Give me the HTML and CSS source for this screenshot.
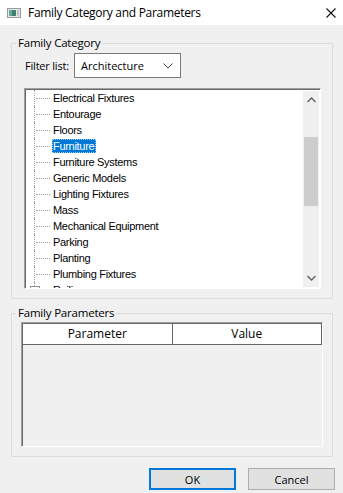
FILE: index.html
```html
<!DOCTYPE html>
<html lang="en">
<head>
    <meta charset="UTF-8">
    <meta name="viewport" content="width=device-width, initial-scale=1.0">
    <title>Family Category and Parameters</title>
    <link rel="stylesheet" href="styles.css">
</head>
<body>
    <div class="dialog">
        <div class="titlebar">
            <svg class="app-icon" width="14" height="10" viewBox="0 0 14 10">
                <rect x="0.5" y="0.5" width="13" height="9" fill="#e8e8e8" stroke="#9a9a9a"/>
                <rect x="2" y="2" width="7" height="6" fill="#3f7f74"/>
                <rect x="2" y="2" width="3" height="6" fill="#6aa79a"/>
                <rect x="10" y="2" width="2" height="6" fill="#b9c4c2"/>
            </svg>
            <span class="title">Family Category and Parameters</span>
            <svg class="close" width="10" height="10" viewBox="0 0 10 10">
                <path d="M0.5 0.5 L9.5 9.5 M9.5 0.5 L0.5 9.5" stroke="#111" stroke-width="1.1" fill="none"/>
            </svg>
        </div>

        <div class="content">
            <fieldset class="group group-category">
                <legend>Family Category</legend>

                <div class="filter-row">
                    <span class="filter-label">Filter list:</span>
                    <div class="combo">
                        <span>Architecture</span>
                        <svg width="10" height="6" viewBox="0 0 10 6">
                            <path d="M0.5 0.5 L5 5 L9.5 0.5" stroke="#444" fill="none"/>
                        </svg>
                    </div>
                </div>

                <div class="tree">
                    <ul class="tree-list">
                        <li>Electrical Fixtures</li>
                        <li>Entourage</li>
                        <li>Floors</li>
                        <li class="selected"><span>Furniture</span></li>
                        <li>Furniture Systems</li>
                        <li>Generic Models</li>
                        <li>Lighting Fixtures</li>
                        <li>Mass</li>
                        <li>Mechanical Equipment</li>
                        <li>Parking</li>
                        <li>Planting</li>
                        <li>Plumbing Fixtures</li>
                        <li class="has-children">Railings</li>
                    </ul>
                    <div class="scrollbar">
                        <svg class="arrow" width="9" height="6" viewBox="0 0 9 6">
                            <path d="M0.5 5 L4.5 1 L8.5 5" stroke="#606060" stroke-width="1.4" fill="none"/>
                        </svg>
                        <div class="track">
                            <div class="thumb"></div>
                        </div>
                        <svg class="arrow" width="9" height="6" viewBox="0 0 9 6">
                            <path d="M0.5 1 L4.5 5 L8.5 1" stroke="#606060" stroke-width="1.4" fill="none"/>
                        </svg>
                    </div>
                </div>
            </fieldset>

            <fieldset class="group group-params">
                <legend>Family Parameters</legend>
                <div class="grid">
                    <div class="grid-head">
                        <div class="col">Parameter</div>
                        <div class="col">Value</div>
                    </div>
                </div>
            </fieldset>

            <div class="buttons">
                <button class="btn btn-default">OK</button>
                <button class="btn">Cancel</button>
            </div>
        </div>
    </div>
</body>
</html>
```

FILE: styles.css
```css
body {
    margin: 0;
    background: #f0f0f0;
    font-family: "Open Sans", "Noto Sans", sans-serif;
    font-size: 11px;
    color: #000;
}
.dialog {
    width: 343px;
    height: 493px;
    overflow: hidden;
}
.titlebar {
    height: 25px;
    background: #fff;
    display: flex;
    align-items: center;
    padding: 0 7px;
}
.app-icon {
    flex: none;
    margin-top: 1px;
}
.title {
    margin-left: 7px;
    font-size: 12px;
    flex: 1;
    letter-spacing: -0.3px;
}
.content {
    padding: 11px 10px 0 11px;
}
.group {
    margin: 0;
    border: 1px solid #dcdcdc;
    min-width: 0;
}
.group legend {
    padding: 0 2px;
    line-height: 14px;
    font-size: 11.5px;
    letter-spacing: -0.2px;
}
.group-category {
    padding: 0 11px 9px 12px;
}
.group-category legend {
    margin-left: -8px;
}
.filter-row {
    display: flex;
    align-items: center;
    margin-top: 3px;
    height: 25px;
}
.filter-label {
    width: 49px;
    margin-left: 1px;
    letter-spacing: -0.2px;
}
.combo {
    border: 1px solid #7a7a7a;
    background: #fff;
    display: flex;
    align-items: center;
    justify-content: space-between;
    padding: 0 7px 0 6px;
    box-sizing: border-box;
    width: 107px;
    height: 25px;
}
.combo svg {
    margin-top: 1px;
}
.tree {
    margin-top: 10px;
    height: 201px;
    box-sizing: border-box;
    border: 1px solid;
    border-color: #a0a0a0 #fff #fff #a0a0a0;
    box-shadow: inset 1px 1px 0 #696969;
    background: #fff;
    display: flex;
    padding: 1px 0 0 1px;
}
.tree-list {
    list-style: none;
    margin: 0;
    padding: 0 0 0 8px;
    flex: 1;
    overflow: hidden;
    font-family: "Liberation Sans", Arial, sans-serif;
    font-size: 11px;
    letter-spacing: -0.3px;
}
.tree-list li {
    height: 16px;
    line-height: 16px;
    position: relative;
    padding-left: 18px;
    border-left: 1px dotted #a0a0a0;
    white-space: nowrap;
}
.tree-list li::before {
    content: "";
    position: absolute;
    left: 1px;
    top: 8px;
    width: 14px;
    border-top: 1px dotted #a0a0a0;
}
.tree-list .selected span {
    background: #0078d7;
    color: #fff;
    padding: 1px 2px 1px 1px;
    margin-left: -1px;
    outline: 1px dotted #99c9ef;
    outline-offset: -1px;
}
.tree-list .has-children::after {
    content: "";
    position: absolute;
    left: -5px;
    top: 4px;
    width: 8px;
    height: 8px;
    border: 1px solid #919191;
    background: #fff;
}
.scrollbar {
    width: 16px;
    margin: 1px 1px 1px 0;
    background: #f0f0f0;
    display: flex;
    flex-direction: column;
    align-items: center;
}
.scrollbar .arrow {
    flex: none;
    margin: 6px 0;
}
.track {
    flex: 1;
    width: 100%;
    padding-top: 28px;
}
.thumb {
    height: 69px;
    background: #cdcdcd;
    margin: 0 1px;
}
.group-params {
    margin-top: 7px;
    padding: 0 9px 9px 9px;
}
.group-params legend {
    margin-left: -5px;
}
.grid {
    margin-top: 2px;
    height: 125px;
    box-sizing: border-box;
    border: 1px solid;
    border-color: #a0a0a0 #fff #fff #a0a0a0;
    box-shadow: inset 1px 1px 0 #696969;
    background: #f0f0f0;
    padding: 1px 0 0 1px;
}
.grid-head {
    display: flex;
    height: 20px;
    background: #fff;
    border-bottom: 1px solid #646464;
    border-right: 1px solid #646464;
    font-size: 12px;
}
.grid-head .col {
    flex: 1;
    text-align: center;
    line-height: 20px;
}
.grid-head .col + .col {
    border-left: 1px solid #646464;
}
.buttons {
    display: flex;
    justify-content: flex-end;
    gap: 12px;
    margin-top: 11px;
    margin-right: -2px;
}
.btn {
    width: 87px;
    height: 22px;
    background: #e1e1e1;
    border: 1px solid #adadad;
    font-family: "Open Sans", "Noto Sans", sans-serif;
    font-size: 11px;
    padding: 0;
    color: #000;
}
.btn-default {
    border: 2px solid #0078d7;
}
```
